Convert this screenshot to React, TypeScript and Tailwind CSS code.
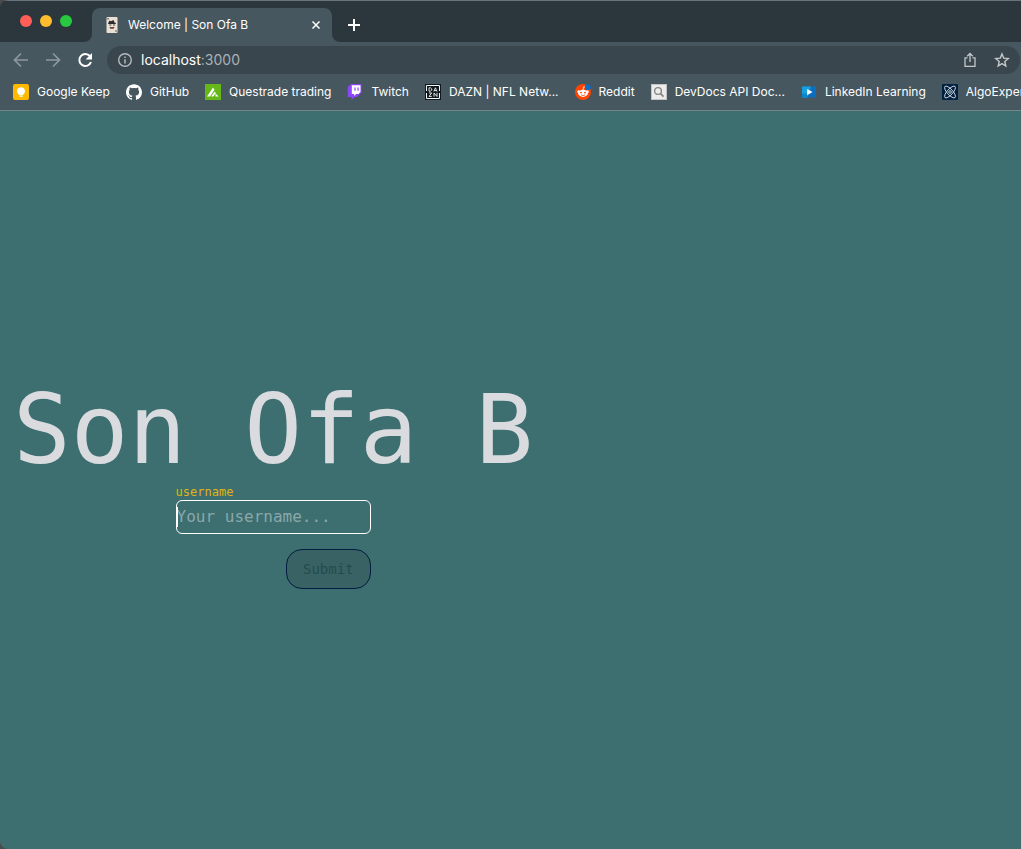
import { useState } from "react";
import type { ReactNode } from "react";
import { SiGithub } from "react-icons/si";

function KeepIcon() {
  return (
    <svg viewBox="0 0 16 16" className="size-4">
      <rect width="16" height="16" rx="2" fill="#ffba00" />
      <path d="M8 3.2a4 4 0 0 0-2.2 7.3v.6h4.4v-.6A4 4 0 0 0 8 3.200ZM6.200 11.600h3.600v1.200H6.200z" fill="#fff" />
    </svg>
  );
}

function QuestradeIcon() {
  return (
    <svg viewBox="0 0 16 16" className="size-4">
      <rect width="16" height="16" fill="#65b817" />
      <path d="M2 12.500 8 3.500l1.500 2.300-4.500 6.700zM6 12.500l3.800-5 1 1.600-2.500 3.400zM10.500 12.500v-3l3.200 3z" fill="#fff" />
    </svg>
  );
}

function TwitchIcon() {
  return (
    <svg viewBox="0 0 16 16" className="size-4">
      <path d="M4 0 .7 3v10h3.800v3l3-3H10l4.500-4.500V0z" fill="#8d45f8" />
      <path d="M4.800 1.300h8.700V8l-2 2H9.200l-2 2v-2H4.800z" fill="#fff" />
      <path d="M8 3.500v3.300M11 3.500v3.300" stroke="#8d45f8" strokeWidth="1.2" />
    </svg>
  );
}

function DaznIcon() {
  return (
    <svg viewBox="0 0 16 16" className="size-4">
      <rect width="16" height="16" fill="#10191e" />
      <path d="M1.5 7V1.5h13V7M1.5 9v5.5h13V9" fill="none" stroke="#f4f4f4" />
      <path
        d="M4 3.8v3.4h1.5L6.8 6V5L5.5 3.8zM8.800 7.500l1.600-3.700L12 7.500M9.400 6.600h2M4 9h2.700L4 12.400h2.800M9 12.700V9l3 3.500V8.800"
        fill="none"
        stroke="#f4f4f4"
        strokeWidth="0.9"
      />
    </svg>
  );
}

function RedditIcon() {
  return (
    <svg viewBox="0 0 16 16" className="size-4">
      <circle cx="8" cy="8" r="8" fill="#ff4500" />
      <path d="m8 6 .8-3.200 2.500.7" fill="none" stroke="#fff" strokeWidth="0.8" />
      <circle cx="3.6" cy="7.700" r="1.400" fill="#fff" />
      <circle cx="12.4" cy="7.700" r="1.400" fill="#fff" />
      <ellipse cx="8" cy="9.300" rx="4.800" ry="3.600" fill="#fff" />
      <circle cx="6" cy="8.600" r="0.9" fill="#ff4500" />
      <circle cx="10" cy="8.600" r="0.9" fill="#ff4500" />
      <path d="M6 10.900q2 1.300 4 0" fill="none" stroke="#ff4500" strokeWidth="0.8" />
      <circle cx="12.8" cy="3.200" r="2.900" fill="#0b6bc9" />
    </svg>
  );
}

function DevDocsIcon() {
  return (
    <svg viewBox="0 0 16 16" className="size-4">
      <rect x="0.5" y="0.5" width="15" height="15" fill="#ececec" stroke="#c4c4c4" />
      <circle cx="7" cy="7" r="3.4" fill="#ececec" stroke="#858585" strokeWidth="1.4" />
      <path d="m9.500 9.500 3 3.200" stroke="#858585" strokeWidth="1.8" />
    </svg>
  );
}

function LinkedInLearningIcon() {
  return (
    <svg viewBox="0 0 16 16" className="size-4">
      <rect x="1" y="2.5" width="14" height="11" fill="#0a6fc0" />
      <path d="M1 2.500h9l-4 11H1z" fill="#18a0dc" />
      <path d="M1 9.500h5v4H1z" fill="#0b86cc" />
      <path d="M6.200 5v6.200L11.500 8z" fill="#fff" />
    </svg>
  );
}

function AlgoExpertIcon() {
  return (
    <svg viewBox="0 0 16 16" className="size-4">
      <rect width="16" height="16" rx="1" fill="#02203f" />
      <g fill="none" stroke="#d5dde5" strokeWidth="0.9">
        <ellipse cx="8" cy="8" rx="7.5" ry="2.8" transform="rotate(48 8 8)" />
        <ellipse cx="8" cy="8" rx="7.5" ry="2.8" transform="rotate(-48 8 8)" />
        <circle cx="8" cy="8" r="1.3" />
      </g>
    </svg>
  );
}

function CardIcon() {
  return (
    <svg viewBox="0 0 16 16" className="size-4 shrink-0">
      <rect x="2.5" y="0" width="11" height="16" rx="1" fill="#eadfd3" />
      <path d="M4.500 5.500 5.500 3.500 7 4.200 9.500 3l1 2.500 1.500.6-.5.900h-7.500z" fill="#2b2b2d" />
      <path d="M5.300 7.600h2v1h-2zM9 7.600h2v1H9z" fill="#444" />
      <path d="M5.500 10h5l-.9 1.800H6.400z" fill="#55403c" />
      <path d="M7 10.300h2v.8H7z" fill="#c33" />
      <path d="M3.500 1h1v1.600h-1zM11.500 13.200h1v1.600h-1z" fill="#333" />
    </svg>
  );
}

const bookmarks: { label: string; icon: ReactNode }[] = [
  { label: "Google Keep", icon: <KeepIcon /> },
  { label: "GitHub", icon: <SiGithub className="size-4 text-white" /> },
  { label: "Questrade trading", icon: <QuestradeIcon /> },
  { label: "Twitch", icon: <TwitchIcon /> },
  { label: "DAZN | NFL Netw...", icon: <DaznIcon /> },
  { label: "Reddit", icon: <RedditIcon /> },
  { label: "DevDocs API Doc...", icon: <DevDocsIcon /> },
  { label: "LinkedIn Learning", icon: <LinkedInLearningIcon /> },
  { label: "AlgoExpert", icon: <AlgoExpertIcon /> },
];

function TabStrip() {
  return (
    <div className="flex h-[42px] items-end border-t border-[#697278] bg-[#2c373d]">
      <div className="flex w-[92px] shrink-0 self-stretch bg-[#46575f]">
        <div className="flex flex-1 gap-2 rounded-br-lg bg-[#2c373d] pt-3.5 pl-5">
          <button aria-label="Close window" className="size-3 rounded-full bg-[#ff5f57]" />
          <button aria-label="Minimize window" className="size-3 rounded-full bg-[#febc2e]" />
          <button aria-label="Zoom window" className="size-3 rounded-full bg-[#28c840]" />
        </div>
      </div>
      <div className="flex h-[34px] w-60 shrink-0 items-center gap-2 rounded-t-lg bg-[#46575f] pr-2 pl-3 text-white">
        <CardIcon />
        <span className="flex-1">Welcome | Son Ofa B</span>
        <button aria-label="Close tab" className="flex size-4 items-center justify-center">
          <svg viewBox="0 0 8 8" className="size-2">
            <path d="m.5.5 7 7m0-7-7 7" stroke="#fff" strokeWidth="1.5" />
          </svg>
        </button>
      </div>
      <div className="h-[34px] flex-1 bg-[#46575f]">
        <div className="flex h-full items-center rounded-bl-lg bg-[#2c373d] pl-4">
          <button aria-label="New tab">
            <svg viewBox="0 0 12 12" className="size-3">
              <path d="M6 0v12M0 6h12" stroke="#fff" strokeWidth="2" />
            </svg>
          </button>
        </div>
      </div>
    </div>
  );
}

function Toolbar() {
  return (
    <div className="flex h-9 items-center pr-px pl-[13px]">
      <div className="flex w-[94px] shrink-0 gap-4">
        <button aria-label="Back">
          <svg viewBox="0 0 16 16" className="size-4">
            <path d="M15 8H2M8 1.500 1.500 8 8 14.500" fill="none" stroke="#8e999f" strokeWidth="1.7" />
          </svg>
        </button>
        <button aria-label="Forward">
          <svg viewBox="0 0 16 16" className="size-4">
            <path d="M1 8h13M8 1.500 14.500 8 8 14.500" fill="none" stroke="#8e999f" strokeWidth="1.7" />
          </svg>
        </button>
        <button aria-label="Reload">
          <svg viewBox="0 0 16 16" className="size-4">
            <path d="M13 4.200A6 6 0 1 0 14 10" fill="none" stroke="#fff" strokeWidth="2" />
            <path d="M15 1v6.400H8.600z" fill="#fff" />
          </svg>
        </button>
      </div>
      <div className="flex h-7 flex-1 items-center gap-2 rounded-full bg-[#3a464d] px-2.5">
        <svg viewBox="0 0 16 16" className="size-4">
          <circle cx="8" cy="8" r="6.3" fill="none" stroke="#b4babd" strokeWidth="1.4" />
          <path d="M8 7.200v4.200M8 4.400v1.500" stroke="#b4babd" strokeWidth="1.5" />
        </svg>
        <span className="flex-1 text-sm text-[#a9b1b6]">
          <span className="text-white">localhost</span>:3000
        </span>
        <div className="flex gap-4">
          <button aria-label="Share">
            <svg viewBox="0 0 16 16" className="size-4">
              <path
                d="M5.500 5.800H3v8.600h10V5.800h-2.500M8 10V1.800M5.200 4.300 8 1.500l2.800 2.800"
                fill="none"
                stroke="#c3c7ca"
                strokeWidth="1.3"
              />
            </svg>
          </button>
          <button aria-label="Bookmark this page">
            <svg viewBox="0 0 16 16" className="size-4">
              <path
                d="m8 1.900 1.700 4.200 4.600.4-3.500 3 1 4.500L8 11.600 4.200 14l1-4.500-3.500-3 4.600-.4z"
                fill="none"
                stroke="#c3c7ca"
                strokeWidth="1.4"
              />
            </svg>
          </button>
        </div>
      </div>
    </div>
  );
}

export default function App() {
  const [username, setUsername] = useState("");

  return (
    <div className="flex min-h-screen flex-col bg-[#4b4b4d] font-['Inter','Liberation_Sans',sans-serif] text-xs">
      <header className="overflow-hidden rounded-tl-lg border-b border-[#75868b] bg-[#46575f]">
        <TabStrip />
        <Toolbar />
        <nav aria-label="Bookmarks" className="flex h-8 items-center gap-4 overflow-hidden pb-1 pl-[13px]">
          {bookmarks.map(({ label, icon }) => (
            <a key={label} href="#" className="flex shrink-0 items-center gap-2 whitespace-nowrap text-white">
              {icon}
              {label}
            </a>
          ))}
        </nav>
      </header>
      <main className="flex flex-1 flex-col items-start justify-center rounded-bl-lg bg-[#3d6e70] pl-[13px] font-['DejaVu_Sans_Mono',monospace]">
        <div className="flex flex-col items-center">
          <h1 className="pt-1 text-8xl leading-[108px] text-[#d9dbde]">Son Ofa B</h1>
          <form className="flex w-[195px] flex-col" onSubmit={(event) => event.preventDefault()}>
            <label htmlFor="username" className="text-xs text-[#e0b50f]">
              username
            </label>
            <div className="relative flex items-center">
              <input
                id="username"
                autoFocus
                value={username}
                onChange={(event) => setUsername(event.target.value)}
                placeholder="Your username..."
                className="h-[34px] w-full rounded-md border border-white bg-transparent text-base text-white outline-none placeholder:text-[#8aa8aa] placeholder-shown:caret-transparent"
              />
              {username === "" && <span className="absolute left-px h-5 w-px bg-white" />}
            </div>
            <button
              type="submit"
              disabled={!username}
              className="mt-[15px] h-10 self-end rounded-2xl border border-[#031d42] bg-[#386263] px-4 text-sm text-[#234c50]"
            >
              Submit
            </button>
          </form>
        </div>
      </main>
    </div>
  );
}
